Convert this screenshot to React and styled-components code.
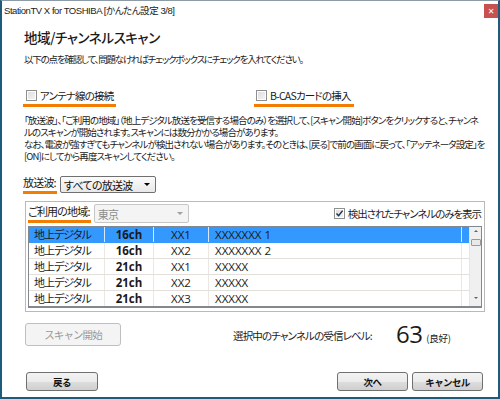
import React from 'react';
import styled, { createGlobalStyle } from 'styled-components';

const JP = '"Noto Sans CJK JP", "Noto Sans", sans-serif';
const ORANGE = '#f27d00';

const GlobalStyle = createGlobalStyle`
  html, body {
    margin: 0;
    padding: 0;
    background: #ffffff;
  }
  body {
    font-family: ${JP};
    color: #1a1a1a;
    font-feature-settings: "palt";
  }
`;

const Window = styled.div`
  width: 500px;
  height: 399px;
  box-sizing: border-box;
  background: #ffffff;
  border-top: 1px solid #8d9ba7;
  border-left: 2px solid #1d5c78;
  border-right: 2px solid #1d5c78;
  border-bottom: 2px solid #1d5c78;
  display: flex;
  flex-direction: column;
  overflow: hidden;
`;

const TitleBar = styled.div`
  height: 18px;
  display: flex;
  align-items: center;
  justify-content: space-between;
  padding-left: 2px;
  font-family: "Liberation Sans", ${JP};
  font-size: 9.5px;
  color: #222;
  letter-spacing: -0.45px;
`;

const CloseButton = styled.div`
  width: 14px;
  height: 14px;
  margin-top: 2px;
  background: #c75050;
  color: #fff;
  font-family: "DejaVu Sans", sans-serif;
  font-size: 8px;
  font-weight: bold;
  display: flex;
  align-items: center;
  justify-content: center;
`;

const Body = styled.div`
  flex: 1;
  display: flex;
  flex-direction: column;
  padding: 0 15px 0 21px;
`;

const Heading = styled.h1`
  margin: 8px 0 0 1px;
  font-size: 13.5px;
  line-height: 20px;
  font-weight: 500;
  letter-spacing: -0.4px;
`;

const Lead = styled.p`
  margin: 5px 0 0 1px;
  font-size: 9.5px;
  line-height: 14px;
  letter-spacing: -1.2px;
  white-space: nowrap;
`;

const CheckRow = styled.div`
  display: grid;
  grid-template-columns: 231px 1fr;
  margin-top: 22px;
`;

const Underlined = styled.span`
  display: inline-flex;
  align-items: center;
  gap: 3px;
  align-self: start;
  justify-self: start;
  padding: 0 ${p => p.$pr ?? 3}px 1px ${p => p.$pl || 0}px;
  border-bottom: 3px solid ${ORANGE};
  font-size: ${p => p.$size || 11}px;
  line-height: 15px;
  letter-spacing: ${p => p.$ls ?? -0.8}px;
  white-space: nowrap;
`;

const Box = styled.span`
  width: 9px;
  height: 9px;
  border: 1px solid #8e8f8f;
  background: linear-gradient(135deg, #dcdcdc, #f6f6f6);
  box-shadow: inset 0 0 0 1px #fff;
  display: inline-flex;
  align-items: center;
  justify-content: center;
  flex: none;
`;

const Para = styled.div`
  margin: 7px 0 0 1px;
  font-size: 9.5px;
  line-height: 12px;
  letter-spacing: -0.9px;
`;

const Line = styled.div`
  white-space: nowrap;
`;

const WaveRow = styled.div`
  display: flex;
  align-items: center;
  gap: 3px;
  margin-top: 13px;
`;

const Select = styled.div`
  width: ${p => p.$w}px;
  height: ${p => p.$h || 16}px;
  box-sizing: border-box;
  border: 1px solid ${p => (p.$disabled ? '#c6c6c6' : '#707070')};
  border-radius: 2px;
  background: ${p => (p.$disabled ? '#f4f4f4' : 'linear-gradient(#fbfbfb, #e8e8e8)')};
  color: ${p => (p.$disabled ? '#8c8c8c' : '#111')};
  display: flex;
  align-items: center;
  justify-content: space-between;
  padding: 0 5px 0 3px;
  font-size: 11px;
  letter-spacing: -0.7px;
`;

const Arrow = styled.span`
  width: 0;
  height: 0;
  border-left: 3px solid transparent;
  border-right: 3px solid transparent;
  border-top: 3px solid ${p => (p.$disabled ? '#a0a0a0' : '#000')};
`;

const Group = styled.div`
  margin: 7px 0 0 2px;
  width: 460px;
  height: 111px;
  box-sizing: border-box;
  border: 1px solid #b9b9b9;
  display: flex;
  flex-direction: column;
  padding: 2px 2px 0 2px;
`;

const GroupHead = styled.div`
  display: flex;
  align-items: center;
  gap: 3px;
  height: 19px;
`;

const ShowOnly = styled.label`
  margin-left: auto;
  display: flex;
  align-items: center;
  gap: 3px;
  font-size: 10.5px;
  letter-spacing: -1.05px;
  padding-right: 1px;
  white-space: nowrap;
`;

const Table = styled.div`
  margin-top: 3px;
  height: 82px;
  box-sizing: border-box;
  border: 1px solid #828790;
  border-bottom-width: 2px;
  display: flex;
  overflow: hidden;
`;

const Rows = styled.div`
  flex: 1;
  display: flex;
  flex-direction: column;
`;

const Row = styled.div`
  display: grid;
  grid-template-columns: 76px 49px 55px 253px 1fr;
  height: 16px;
  flex: none;
  background: ${p => (p.$selected ? '#3399ff' : '#fff')};
  border-bottom: 1px solid ${p => (p.$selected ? '#3399ff' : '#e3dfdb')};
  box-sizing: border-box;
  line-height: 15px;
`;

const Cell = styled.div`
  border-right: 1px solid ${p => (p.$selected ? '#d6e9ff' : '#ebe8e4')};
  text-align: ${p => p.$align || 'left'};
  padding-left: ${p => p.$pl || 0}px;
  font-weight: ${p => (p.$bold ? 700 : 400)};
  font-family: ${p => (p.$latin ? '"Open Sans", "Noto Sans", sans-serif' : JP)};
  font-size: ${p => (p.$latin ? 11.5 : 11)}px;
  letter-spacing: ${p => (p.$latin ? '0' : '-1px')};
  white-space: nowrap;
  overflow: hidden;
  &:last-child {
    border-right: none;
  }
`;

const ScrollBar = styled.div`
  width: 12px;
  background: #f0f0f0;
  border-left: 1px solid #e6e6e6;
  display: flex;
  flex-direction: column;
  align-items: center;
  padding: 3px 0;
  box-sizing: border-box;
`;

const Thumb = styled.div`
  width: 8px;
  height: 5px;
  margin-top: 7px;
  border: 1px solid #9a9a9a;
  border-radius: 1px;
  background: #e8e8e8;
`;

const ScrollArrow = styled.span`
  width: 0;
  height: 0;
  border-left: 2px solid transparent;
  border-right: 2px solid transparent;
  ${p => (p.$up ? 'border-bottom: 2px solid #606060;' : 'border-top: 2px solid #606060; margin-top: auto; margin-bottom: 4px;')}
`;

const ScanRow = styled.div`
  display: flex;
  align-items: center;
  margin-top: 9px;
  padding-left: 2px;
`;

const Button = styled.button`
  width: ${p => p.$w}px;
  height: ${p => p.$h || 19}px;
  box-sizing: border-box;
  border: 1px solid ${p => (p.disabled ? '#bfbfbf' : '#707070')};
  border-radius: 3px;
  background: ${p => (p.disabled ? '#f4f4f4' : 'linear-gradient(#f2f2f2 0%, #ebebeb 50%, #dddddd 51%, #cfcfcf 100%)')};
  color: ${p => (p.disabled ? '#9a9a9a' : '#111')};
  font-family: ${JP};
  font-size: ${p => (p.disabled ? 10.5 : 9.5)}px;
  font-weight: ${p => (p.disabled ? 400 : 700)};
  letter-spacing: ${p => (p.disabled ? -0.9 : -0.6)}px;
  padding: 0;
  display: flex;
  align-items: center;
  justify-content: center;
`;

const LevelLabel = styled.span`
  margin-left: 112px;
  margin-top: 3px;
  font-size: 10.5px;
  letter-spacing: -0.85px;
  white-space: nowrap;
`;

const LevelValue = styled.span`
  margin-left: 24px;
  font-family: "Open Sans", "Noto Sans", sans-serif;
  font-size: 24px;
  line-height: 26px;
  font-weight: 400;
  letter-spacing: -0.5px;
`;

const LevelNote = styled.span`
  margin-left: 4px;
  margin-top: 7px;
  font-size: 9.5px;
  letter-spacing: -0.3px;
`;

const Footer = styled.div`
  margin-top: 25px;
  display: flex;
  align-items: center;
  gap: 4px;
  padding-left: 3px;
`;

const Spacer = styled.div`
  flex: 1;
`;

const CheckMark = () => (
  <svg width="9" height="9" viewBox="0 0 9 9">
    <path d="M1.5 4.6 L3.6 6.8 L7.6 1.6" fill="none" stroke="#1b2c4a" strokeWidth="1.4" />
  </svg>
);

const channels = [
  { kind: '地上デジタル', ch: '16ch', id: 'XX1', name: 'XXXXXXX 1', selected: true },
  { kind: '地上デジタル', ch: '16ch', id: 'XX2', name: 'XXXXXXX 2' },
  { kind: '地上デジタル', ch: '21ch', id: 'XX1', name: 'XXXXX' },
  { kind: '地上デジタル', ch: '21ch', id: 'XX2', name: 'XXXXX' },
  { kind: '地上デジタル', ch: '21ch', id: 'XX3', name: 'XXXXX' },
];

const notes = [
  '「放送波」、「ご利用の地域」（地上デジタル放送を受信する場合のみ）を選択して、[スキャン開始]ボタンをクリックすると、チャンネ',
  'ルのスキャンが開始されます。スキャンには数分かかる場合があります。',
  'なお、電波が強すぎてもチャンネルが検出されない場合があります。そのときは、[戻る]で前の画面に戻って、「アッテネータ設定」を',
  '[ON]にしてから再度スキャンしてください。',
];

export default function App() {
  return (
    <>
      <GlobalStyle />
      <Window>
        <TitleBar>
          <span>StationTV X for TOSHIBA [かんたん設定 3/8]</span>
          <CloseButton>✕</CloseButton>
        </TitleBar>
        <Body>
          <Heading>地域/チャンネルスキャン</Heading>
          <Lead>以下の点を確認して、問題なければチェックボックスにチェックを入れてください。</Lead>

          <CheckRow>
            <Underlined $pl={3} $size={10.5}>
              <Box />
              アンテナ線の接続
            </Underlined>
            <Underlined $pl={2} $size={10.5}>
              <Box />
              B-CASカードの挿入
            </Underlined>
          </CheckRow>

          <Para>
            {notes.map((n, i) => (
              <Line key={i}>{n}</Line>
            ))}
          </Para>

          <WaveRow>
            <Underlined $pr={1}>放送波:</Underlined>
            <Select $w={96} $h={17}>
              すべての放送波
              <Arrow />
            </Select>
          </WaveRow>

          <Group>
            <GroupHead>
              <Underlined $pr={1}>ご利用の地域:</Underlined>
              <Select $w={95} $h={19} $disabled>
                東京
                <Arrow $disabled />
              </Select>
              <ShowOnly>
                <Box>
                  <CheckMark />
                </Box>
                検出されたチャンネルのみを表示
              </ShowOnly>
            </GroupHead>
            <Table>
              <Rows>
                {channels.map((c, i) => (
                  <Row key={i} $selected={c.selected}>
                    <Cell $selected={c.selected} $pl={5}>{c.kind}</Cell>
                    <Cell $selected={c.selected} $align="center" $bold $latin>{c.ch}</Cell>
                    <Cell $selected={c.selected} $align="center" $latin>{c.id}</Cell>
                    <Cell $selected={c.selected} $pl={6} $latin>{c.name}</Cell>
                    <Cell $selected={c.selected} />
                  </Row>
                ))}
              </Rows>
              <ScrollBar>
                <ScrollArrow $up />
                <Thumb />
                <ScrollArrow />
              </ScrollBar>
            </Table>
          </Group>

          <ScanRow>
            <Button $w={96} $h={23} disabled>スキャン開始</Button>
            <LevelLabel>選択中のチャンネルの受信レベル:</LevelLabel>
            <LevelValue>63</LevelValue>
            <LevelNote>(良好)</LevelNote>
          </ScanRow>

          <Footer>
            <Button $w={72}>戻る</Button>
            <Spacer />
            <Button $w={71}>次へ</Button>
            <Button $w={71}>キャンセル</Button>
          </Footer>
        </Body>
      </Window>
    </>
  );
}
